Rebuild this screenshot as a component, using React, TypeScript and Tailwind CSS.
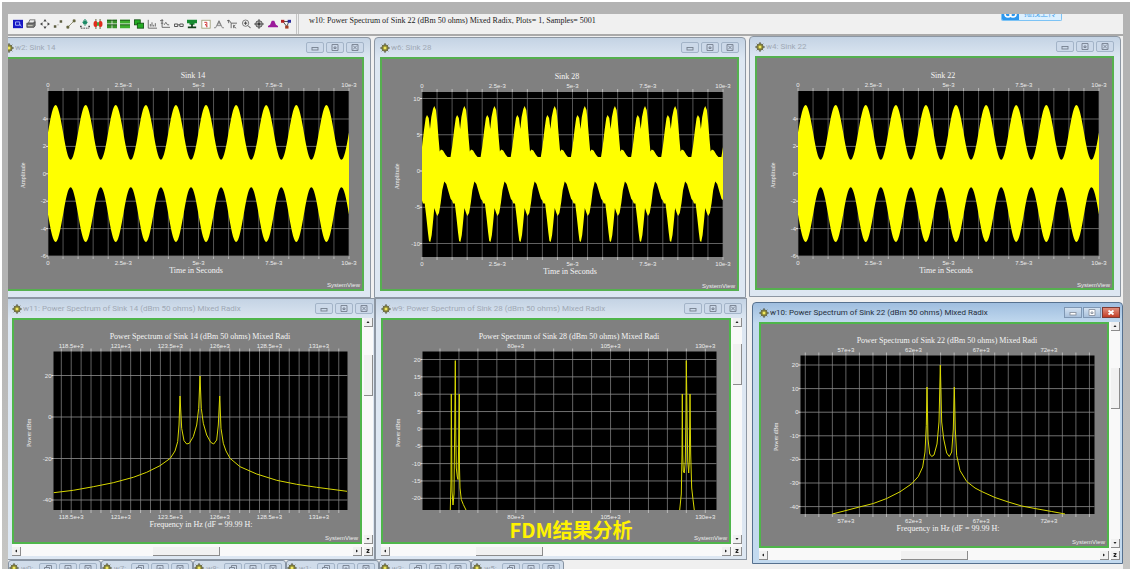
import { ReactNode } from 'react';
import clsx from 'clsx';

interface Axis {
  start: number;
  step: number;
  count: number;
  labels: Record<number, string>;
}

interface PlotProps {
  title: string;
  yTitle: string;
  xTitle?: string;
  viewBox: string;
  area: { x: number; y: number; w: number; h: number };
  xAxis: Axis;
  yAxis: Axis;
  right: number;
  bottom: number;
  center: number;
  xCenter: number;
  gridColor: string;
  children: ReactNode;
}

const range = (n: number) => Array.from({ length: n }, (_, i) => i);

const Plot = ({
  title,
  yTitle,
  xTitle,
  viewBox,
  area,
  xAxis,
  yAxis,
  right,
  bottom,
  center,
  xCenter,
  gridColor,
  children,
}: PlotProps) => {
  const endY = area.y + area.h;
  const endX = area.x + area.w;
  return (
    <svg viewBox={viewBox} className="block h-auto w-full bg-[#808080]" role="img" aria-label={title}>
      <rect x={area.x} y={area.y} width={area.w} height={area.h} fill="#000" />
      {range(xAxis.count).map((i) => {
        const x = xAxis.start + i * xAxis.step;
        return (
          <g key={i}>
            <line x1={x} x2={x} y1={area.y} y2={endY} stroke={gridColor} strokeWidth="0.7" />
            <path d={`M${x} ${area.y - 3}v3M${x} ${endY}v3`} stroke="#d4d4d4" strokeWidth="0.7" />
          </g>
        );
      })}
      {range(yAxis.count).map((i) => {
        const y = yAxis.start + i * yAxis.step;
        return (
          <g key={i}>
            <line x1={area.x} x2={endX} y1={y} y2={y} stroke={gridColor} strokeWidth="0.8" />
            <line x1={area.x - 2} x2={area.x} y1={y} y2={y} stroke="#e5e5e5" />
          </g>
        );
      })}
      {children}
      <g fill="#ececec" className="font-['Liberation_Sans',sans-serif] text-[6px]">
        {Object.entries(xAxis.labels).map(([i, label]) => (
          <g key={i} textAnchor="middle">
            <text x={xAxis.start + Number(i) * xAxis.step} y={area.y - 4}>{label}</text>
            <text x={xAxis.start + Number(i) * xAxis.step} y={endY + 9}>{label}</text>
          </g>
        ))}
        {Object.entries(yAxis.labels).map(([i, label]) => (
          <text key={i} x={area.x - 2} y={yAxis.start + Number(i) * yAxis.step + 2} textAnchor="end">{label}</text>
        ))}
        <text x={right} y={bottom} textAnchor="end">SystemView</text>
      </g>
      <g fill="#f4f4f4" textAnchor="middle" className="font-['Liberation_Serif',serif] text-[8px]">
        <text x={center} y={area.y - 13}>{title}</text>
        {xTitle && <text x={xCenter} y={endY + 17}>{xTitle}</text>}
        <text transform={`translate(19 ${area.y + area.h / 2 + 2}) rotate(-90)`} className="text-[6px]">{yTitle}</text>
      </g>
    </svg>
  );
};

const AREA_WAVE = { x: 42, y: 35, w: 301, h: 165 };
const TIME_AXIS: Axis = {
  start: 42,
  step: 15.05,
  count: 21,
  labels: { 0: '0', 5: '2.5e-3', 10: '5e-3', 15: '7.5e-3', 20: '10e-3' },
};

// 3 + 2 sin(wt) mirrored around zero, ten periods across the plot
const amEnvelope = () => {
  const top: string[] = [];
  const low: string[] = [];
  for (let i = 0; i <= 301; i++) {
    const v = (3 + 2 * Math.sin((i / 30.1) * 2 * Math.PI)) * 13.7;
    top.push(`${42 + i},${(117.5 - v).toFixed(1)}`);
    low.unshift(`${42 + i},${(117.5 + v).toFixed(1)}`);
  }
  return [...top, ...low].join(' ');
};

// One period of the summed signal, [x, y] pairs
const UPPER = [
  [0, 90], [2, 73], [3.7, 61], [5, 58], [6.7, 61], [8, 72], [9.3, 60], [11, 52], [12.3, 49], [14, 53],
  [15.3, 66], [16.7, 83], [17.7, 94.5], [19, 92.5], [21, 93.5], [23.7, 98], [25.5, 100], [28.5, 100], [29.3, 95],
];
const LOWER = [
  [0, 143.5], [1, 146.5], [2.7, 146.5], [4.3, 160], [6, 176], [7, 184], [8.3, 185], [9.7, 178], [11, 165],
  [12.3, 151], [14, 156], [15.3, 159], [17, 156], [18.7, 146], [20.3, 133], [22.3, 124.5], [24.3, 127], [26.3, 134], [28.7, 142],
];

const sumEnvelope = () => {
  const at = (src: number[][]) =>
    range(10).flatMap((p) => src.map(([x, y]) => `${(42 + p * 30.1 + x).toFixed(1)},${y}`));
  return [...at(UPPER), '343,90', '343,143', ...at(LOWER).reverse()].join(' ');
};

const AmPlot = ({ title, viewBox }: { title: string; viewBox: string }) => (
  <Plot
    title={title}
    yTitle="Amplitude"
    xTitle="Time in Seconds"
    viewBox={viewBox}
    area={AREA_WAVE}
    xAxis={TIME_AXIS}
    yAxis={{ start: 63, step: 27.4, count: 6, labels: { 0: '4', 1: '2', 2: '0', 3: '-2', 4: '-4', 5: '-6' } }}
    right={354}
    bottom={231}
    center={187}
    xCenter={190}
    gridColor="#7a7a7a"
  >
    <polygon points={amEnvelope()} fill="#ff0" />
  </Plot>
);

const SumPlot = () => (
  <Plot
    title="Sink 28"
    yTitle="Amplitude"
    xTitle="Time in Seconds"
    viewBox="2 2 355 230"
    area={AREA_WAVE}
    xAxis={TIME_AXIS}
    yAxis={{ start: 41.5, step: 36.25, count: 5, labels: { 0: '10', 1: '5', 2: '0', 3: '-5', 4: '-10' } }}
    right={355}
    bottom={231}
    center={187}
    xCenter={190}
    gridColor="#7a7a7a"
  >
    <polygon points={sumEnvelope()} fill="#ff0" />
  </Plot>
);

const AREA_SPECTRUM = { x: 41.5, y: 33.5, w: 294, h: 158.5 };

interface SpectrumProps {
  title: string;
  xTitle?: string;
  xAxis: Axis;
  yAxis: Axis;
  traces: string[];
}

const Spectrum = ({ traces, ...rest }: SpectrumProps) => (
  <Plot
    {...rest}
    yTitle="Power dBm"
    viewBox="2 2 346 222"
    area={AREA_SPECTRUM}
    right={346}
    bottom={222}
    center={188}
    xCenter={189}
    gridColor="#8e8e8e"
  >
    {traces.map((points, i) => (
      <polyline key={i} points={points} fill="none" stroke="#d8d800" strokeWidth="1" strokeLinejoin="round" />
    ))}
  </Plot>
);

const SINK14 = [
  '41.7,174.7 61.3,172.3 81.3,168.7 101.3,164.7 121.3,159.3 134.7,154.3 148,147.7 158.3,140.3 163,133 165.7,123.7 167,107 168,78 169.7,110.3 172,122.7 174.7,126 177.3,125.3 181.3,118.7 184.7,107 186.7,90.3 188,58 189.3,90.3 191.3,105.3 194.7,117 198.7,124.3 201.7,126 204.7,122 206.3,107 207.7,78 209,110.3 211.3,125.3 214,133 218,140.3 228,148.7 244.7,156 264.7,162.3 284.7,166.3 304.7,169.3 335,173.3',
];
const SINK28 = [
  '69.3,192 70,163 70.3,76 71,173 72,187 73,176 73.7,110 74.3,42.6 74.7,110 75.3,150 76.3,159 77,161.5 77.7,126 78.3,76 78.5,150 79,170 80.3,181.5 82.3,186.5 85,192',
  '298.7,192 300.3,176 301,136 301.3,76 301.7,136 302.3,153 303.3,155 304.3,143 305,93 305.3,42.6 306,93 306.7,143 307.7,155 308.3,143 309,76 309.7,136 310.7,170 312,181.5 313.3,192',
];
const SINK22 = [
  '73.3,192 87,188.5 100.3,185 114.3,181.5 127.7,176.5 141,169.8 152.7,161.8 159.3,154.5 163.7,145 166,130 167.3,103.5 168,65 169,117 170.7,132 172.7,134.5 175,133 178,122 180,100 181.3,43 182.7,100 184.7,117 187.7,131 190.3,134.5 192.7,130 194.3,107 195.3,65 196.3,107 197.7,133.5 201,148.5 207.7,159.5 216,166 222.7,169.5 236,175.5 249.3,180 262.7,184 276,186.5 292.7,189.5 306,192',
];

const AppIcon = ({ className }: { className?: string }) => (
  <svg viewBox="0 0 10 10" className={clsx('h-[10px] w-[10px] shrink-0', className)} aria-hidden="true">
    <circle cx="5" cy="5" r="3.2" fill="#d9d24a" stroke="#55553a" strokeWidth="0.9" />
    <path d="M5 0v10M0 5h10" stroke="#44442c" strokeWidth="0.8" />
    <path d="M1.6 1.6l6.8 6.8M8.4 1.6L1.6 8.4" stroke="#55553a" strokeWidth="0.6" />
    <circle cx="5" cy="5" r="1.3" fill="#f0e860" />
  </svg>
);

const GLYPHS = {
  minimize: <rect x="3" y="4.5" width="6" height="2.5" />,
  restore: <path d="M4.5 3.5v-2h5v4h-2M2.5 3.5h5v4h-5z" />,
  maximize: <path d="M3 1.5h6v6H3zM5 4h2v1.5H5z" />,
  close: <path d="M3 1.5h6v6H3zM4 2.5l4 4M8 2.5l-4 4" />,
};

type Glyph = keyof typeof GLYPHS;

const CaptionButton = ({ glyph, label, active }: { glyph: Glyph; label: string; active?: boolean }) => (
  <button
    type="button"
    aria-label={label}
    className={clsx(
      'flex h-[11px] w-[18px] items-center justify-center border',
      !active && 'rounded-[2px] border-[#a3b4c8] bg-[#ccd9e9]',
      active && glyph !== 'close' && 'border-[#7f97b3] bg-linear-to-b from-[#d4e2f1] to-[#a9c1dc]',
      active && glyph === 'close' && 'border-[#7c3a34] bg-linear-to-b from-[#e08d7c] to-[#c23c25]'
    )}
  >
    <svg
      viewBox="0 0 12 9"
      className="h-[9px] w-[12px]"
      fill={active ? '#fff' : 'none'}
      stroke={active ? '#8b93a0' : '#76808f'}
      strokeWidth="0.9"
      aria-hidden="true"
    >
      {active && glyph === 'close' ? <path d="M3.5 2.5l5 4M8.5 2.5l-5 4" stroke="#fff" strokeWidth="1.8" /> : GLYPHS[glyph]}
    </svg>
  </button>
);

const TitleBar = ({ title, active, cut }: { title: string; active?: boolean; cut?: boolean }) => (
  <div className="flex h-[19px] items-center">
    <AppIcon className={cut ? '-ml-1' : ''} />
    <h2
      className={clsx(
        "ml-px flex-1 truncate font-['Roboto',sans-serif] text-[8px] leading-3",
        active ? 'text-[#26303c]' : 'text-[#a0a9b5]'
      )}
    >
      {title}
    </h2>
    <div className={clsx('flex', active ? 'gap-px' : 'gap-[2px]')}>
      <CaptionButton glyph="minimize" label="Minimize" active={active} />
      <CaptionButton glyph="maximize" label="Maximize" active={active} />
      <CaptionButton glyph="close" label="Close" active={active} />
    </div>
  </div>
);

const ScrollButton = ({ d, label }: { d: string; label: string }) => (
  <button type="button" aria-label={label} className="h-[9px] w-[9px] shrink-0 border-r border-b border-[#8c8c8c] bg-[#f1f1f1]">
    <svg viewBox="0 0 8 8" className="h-[8px] w-[8px]" aria-hidden="true">
      <path d={d} fill="#222" />
    </svg>
  </button>
);

// before/after are the free track lengths on each side of the thumb
const VScroll = ({ before, after }: { before: number; after: number }) => (
  <div className="flex w-[9px] flex-col bg-[#f9f9f9]">
    <ScrollButton label="Scroll up" d="M2.5 5h3L4 3z" />
    <div style={{ flexGrow: before }} />
    <div className="h-[41px] border-r border-b border-[#8c8c8c] bg-[#f1f1f1]" />
    <div style={{ flexGrow: after }} />
    <ScrollButton label="Scroll down" d="M2.5 3h3L4 5z" />
  </div>
);

const HScroll = ({ before, after }: { before: number; after: number }) => (
  <div className="flex h-[9px] min-w-0 flex-1 bg-[#f9f9f9]">
    <ScrollButton label="Scroll left" d="M5 2.5v3L3 4z" />
    <div style={{ flexGrow: before }} />
    <div className="w-[67px] border-r border-b border-[#8c8c8c] bg-[#f1f1f1]" />
    <div style={{ flexGrow: after }} />
    <ScrollButton label="Scroll right" d="M3 2.5v3L5 4z" />
  </div>
);

const WaveWindow = ({ title, cut, children }: { title: string; cut?: boolean; children: ReactNode }) => (
  <section
    className={clsx(
      'border border-[#8d97a3] bg-linear-to-b from-[#c4d3e4] to-[#dde7f2] to-8% pr-[6px] pb-[6px]',
      cut ? 'rounded-tr-[4px] border-l-0' : 'rounded-t-[4px] pl-[5px]'
    )}
  >
    <TitleBar title={title} cut={cut} />
    <div className={clsx('border-2 border-[#55b04f]', cut && 'border-l-0')}>{children}</div>
  </section>
);

interface SpectrumWindowProps {
  title: string;
  active?: boolean;
  className?: string;
  h: [number, number];
  v: [number, number];
  children: ReactNode;
}

const SpectrumWindow = ({ title, active, className, h, v, children }: SpectrumWindowProps) => (
  <section
    className={clsx(
      'border pb-[3px]',
      active
        ? 'border-[#56718f] bg-linear-to-b from-[#9fbedf] to-[#c3daef] to-8%'
        : 'border-[#8d97a3] bg-linear-to-b from-[#c4d3e4] to-[#dde7f2] to-8%',
      className
    )}
  >
    <TitleBar title={title} active={active} />
    <div className="bg-[#f9f9f9]">
      <div className="flex gap-[2px]">
        <div className="min-w-0 flex-1 border-2 border-[#4fb54b]">{children}</div>
        <VScroll before={v[0]} after={v[1]} />
      </div>
      <div className="flex gap-[2px] pt-[3px]">
        <HScroll before={h[0]} after={h[1]} />
        <ScrollButton label="Zoom" d="M2.5 2h3v1L4 5h1.5v1h-3V5L4 3H2.5z" />
      </div>
    </div>
  </section>
);

const MinimizedWindow = ({ title }: { title: string }) => (
  <section className="flex h-[24px] min-w-0 items-start gap-[2px] rounded-t-[3px] border border-[#8793a2] bg-[#d0dcea] pt-[2px] pr-[3px]">
    <AppIcon />
    <span className="flex-1 truncate font-['Roboto',sans-serif] text-[8px] leading-3 text-[#a0a9b5]">{title}</span>
    <CaptionButton glyph="restore" label="Restore" />
    <CaptionButton glyph="maximize" label="Maximize" />
    <CaptionButton glyph="close" label="Close" />
  </section>
);

const TOOLS: { label: string; icon: ReactNode }[] = [
  { label: 'System window', icon: <><rect y="1" width="12" height="10" fill="#1717c4" /><path d="M3 3.5h5v4H3zM8 6l2 3" fill="none" stroke="#b8c8ff" /></> },
  { label: 'Print', icon: <><path d="M3 5l1.5-4H11L9 5z" fill="#eee" stroke="#444" strokeWidth="0.8" /><path d="M1 5h9l1-2v5L9.5 10H1z" fill="#777" stroke="#333" strokeWidth="0.8" /><path d="M2 8h6" stroke="#ddc" /></> },
  { label: 'Pan', icon: <path d="M6 0l2 3H4zM6 12l2-3H4zM0 6l3-2v4zM12 6L9 4v4z" fill="#444" /> },
  { label: 'Points', icon: <path d="M1 7.5h3v3H1zM8 1.5h3v3H8zM5.5 6.500h1v1h-1z" fill="#5c5c40" /> },
  { label: 'Connect points', icon: <path d="M2 10L10 2M1 8.5h2.5V11H1zM8.5 1H11v2.5H8.5z" fill="#66663f" stroke="#66663f" strokeWidth="0.8" /> },
  { label: 'Point labels', icon: <><path d="M6 0v8M3 4h6M4 2l4 4M8 2L4 6" stroke="#1c8a66" strokeWidth="1.3" /><path d="M0 8h2v2H0zM10 8h2v2h-2z" fill="#444" /><path d="M1 11h10" stroke="#333" strokeDasharray="2 1" /></> },
  { label: 'Segments', icon: <><path d="M3.5 0v12M8.5 0v12" stroke="#4b4b1b" /><ellipse cx="3" cy="6" rx="2.4" ry="3.5" fill="#e02b1c" /><ellipse cx="9" cy="6" rx="2.4" ry="3.5" fill="#e02b1c" /><path d="M6 4v4" stroke="#1fa32a" strokeWidth="2" /></> },
  { label: 'Tile windows', icon: <><path d="M0 1h5.5v4.5H0zM6.5 1H12v4.5H6.5zM0 6.5h5.5V11H0zM6.5 6.5H12V11H6.5z" fill="#3a942b" /><path d="M0 1.5h12M0 7h12" stroke="#1d4d18" /></> },
  { label: 'Stack windows', icon: <><path d="M0 1h12v4.5H0zM0 6.5h12V11H0z" fill="#3fae2d" /><path d="M0 1.5h12M0 7h12" stroke="#1d4d18" /></> },
  { label: 'Cascade windows', icon: <><rect x="0.5" y="1" width="7" height="6" fill="#25ad25" stroke="#144f14" /><rect x="4" y="5" width="7.5" height="6" fill="#25ad25" stroke="#144f14" /></> },
  { label: 'Log axis X', icon: <path d="M1.5 1v10H12M4 9V6M6 9V4M8 9V7M10 9V5" fill="none" stroke="#555" /> },
  { label: 'Log axis Y', icon: <path d="M2.5 0v10H12M0 2h4M1 5h3M5 7l2-3 2 3h2" fill="none" stroke="#555" /> },
  { label: 'Rescale', icon: <path d="M0.5 6h4v3h-4zM7 6h4v3H7zM5 7h2" fill="none" stroke="#555" strokeWidth="1.2" /> },
  { label: 'Animate', icon: <><path d="M0 1h12v4H9v2H3V5H0z" fill="#168a30" /><path d="M5 6h2v3h4v2H1V9h4z" fill="#113e1a" /></> },
  { label: 'Statistics', icon: <><rect x="1" y="1.5" width="10" height="9.5" fill="#fff" stroke="#9a9a72" /><path d="M4 4h3M5 6l2 3M7 4v6" stroke="#d23939" strokeWidth="1.2" /></> },
  { label: 'Peak', icon: <path d="M0 10.5h2L6 2l4 8.5h2M4 8l2-5 2 5z" fill="none" stroke="#777" /> },
  { label: 'Measure', icon: <path d="M0 2h3l2 3h7M5 5v6M8 7v4M10 7l-2 2 3 2M2 1v4" fill="none" stroke="#555" /> },
  { label: 'Zoom', icon: <><circle cx="5.5" cy="5" r="3.8" fill="none" stroke="#666" /><path d="M3.5 5h4M5.5 3v4M8.5 8l3 3" stroke="#444" strokeWidth="1.2" /></> },
  { label: 'Crosshair', icon: <><circle cx="6" cy="6" r="4" fill="#b5b5b5" stroke="#444" /><circle cx="6" cy="6" r="1.6" fill="#333" /><path d="M6 0v12M0 6h12" stroke="#444" /></> },
  { label: 'Sink calculator', icon: <path d="M0 10h12V8.500L9.5 7 7.5 2h-3l-2 5L0 8.500z" fill="#9b1a9b" /> },
  { label: 'Block diagram', icon: <><path d="M2 3h7M3 4l4 5M9 4L7 9" stroke="#333" /><path d="M0 1h4v3.5H0z" fill="#b32020" /><path d="M8 1h4v3.5H8z" fill="#2a2a9a" /><path d="M5 8h4v3.5H5z" fill="#a33c22" /></> },
];

const Toolbar = () => (
  <header className="relative flex h-[22px] shrink-0 items-stretch border-b-2 border-[#aaa] bg-[#f0f0f0]">
    <div className="ml-[3px] flex w-[282px] items-center">
      {TOOLS.map((tool) => (
        <button key={tool.label} type="button" aria-label={tool.label} className="flex flex-1 justify-center">
          <svg viewBox="0 0 12 12" className="h-[10px] w-[10px]" fill="none">{tool.icon}</svg>
        </button>
      ))}
    </div>
    <div className="ml-[3px] w-[3px] border-x border-[#c4c4c4]" />
    <p className="ml-[10px] pt-[2px] font-['Liberation_Serif',serif] text-[8px] leading-[10px] text-[#222]">
      w10: Power Spectrum of Sink 22 (dBm 50 ohms) Mixed Radix, Plots= 1, Samples= 5001
    </p>
    {/* Upload widget tucked under the top edge */}
    <div className="absolute top-0 right-[61px] h-[7px] w-[61px] overflow-hidden rounded-b-[2px] border border-t-0 border-[#7cc3f5]">
      <button type="button" className="-mt-[8px] flex w-full items-center bg-[#dcf0ff] text-[#3fa0ea]">
        <svg viewBox="0 0 17 14" className="h-[14px] w-[17px] shrink-0 bg-[#2d97ee]" fill="none" stroke="#fff" strokeWidth="1.6" aria-hidden="true">
          <circle cx="6" cy="8" r="3" />
          <circle cx="11" cy="8" r="3" />
        </svg>
        <span className="flex-1 font-['Noto_Sans_CJK_SC',sans-serif] text-[8px] leading-[14px]">拖拽上传</span>
      </button>
    </div>
  </header>
);

const App = () => (
  <div className="flex h-screen flex-col overflow-hidden border-t-2 border-l-2 border-white bg-linear-to-b from-[#b3b3b3] from-50% to-[#c6c6c4] pt-[12px] pr-[7px] pl-[6px]">
    <Toolbar />
    <main className="grid min-h-0 flex-1 grid-cols-[741fr_374fr] items-start overflow-hidden bg-[#f0f0f0]">
      <div className="pt-px">
        <div className="grid grid-cols-[363fr_372fr] gap-[3px] pr-[3px]">
          <WaveWindow title="w2: Sink 14" cut>
            <AmPlot title="Sink 14" viewBox="2 3 354 230" />
          </WaveWindow>
          <WaveWindow title="w6: Sink 28">
            <SumPlot />
          </WaveWindow>
        </div>
        <div className="grid grid-cols-[367fr_372fr] pr-[2px]">
          <SpectrumWindow
            title="w11: Power Spectrum of Sink 14 (dBm 50 ohms) Mixed Radix"
            className="border-l-0 pr-px pl-[4px]"
            h={[132, 134]}
            v={[28, 139]}
          >
            <Spectrum
              title="Power Spectrum of Sink 14 (dBm 50 ohms) Mixed Radi"
              xTitle="Frequency in Hz (dF = 99.99 H:"
              xAxis={{
                start: 49.3,
                step: 9.91,
                count: 29,
                labels: { 1: '118.5e+3', 6: '121e+3', 11: '123.5e+3', 16: '126e+3', 21: '128.5e+3', 26: '131e+3' },
              }}
              yAxis={{ start: 57.5, step: 41.5, count: 4, labels: { 0: '20', 1: '0', 2: '-20', 3: '-40' } }}
              traces={SINK14}
            />
          </SpectrumWindow>
          <div className="relative">
            <SpectrumWindow
              title="w9: Power Spectrum of Sink 28 (dBm 50 ohms) Mixed Radix"
              className="pr-[4px] pl-[5px]"
              h={[86, 180]}
              v={[17, 150]}
            >
              <Spectrum
                title="Power Spectrum of Sink 28 (dBm 50 ohms) Mixed Radi"
                xAxis={{ start: 59, step: 18.95, count: 15, labels: { 4: '80e+3', 9: '105e+3', 14: '130e+3' } }}
                yAxis={{
                  start: 41.5,
                  step: 17.35,
                  count: 9,
                  labels: { 0: '20', 1: '15', 2: '10', 3: '5', 4: '0', 5: '-5', 6: '-10', 7: '-15', 8: '-20' },
                }}
                traces={SINK28}
              />
            </SpectrumWindow>
            <p className="absolute inset-x-0 bottom-[18px] pl-[20px] text-center font-['Noto_Sans_CJK_SC',sans-serif] text-[20px] leading-6 font-bold text-[#fff200]">
              FDM结果分析
            </p>
          </div>
        </div>
        <div className="grid w-3/4 grid-cols-6">
          <MinimizedWindow title="w0:" />
          <MinimizedWindow title="w7:" />
          <MinimizedWindow title="w8:" />
          <MinimizedWindow title="w1:" />
          <MinimizedWindow title="w3:" />
          <MinimizedWindow title="w5:" />
        </div>
      </div>
      <div className="flex flex-col gap-[5px]">
        <div className="pr-[2px]">
          <WaveWindow title="w4: Sink 22">
            <AmPlot title="Sink 22" viewBox="1 2 355 230" />
          </WaveWindow>
        </div>
        <SpectrumWindow
          title="w10: Power Spectrum of Sink 22 (dBm 50 ohms) Mixed Radix"
          className="ml-[3px] rounded-t-[4px] pr-[2px] pl-[6px]"
          h={[133, 133]}
          v={[37, 130]}
          active
        >
          <Spectrum
            title="Power Spectrum of Sink 22 (dBm 50 ohms) Mixed Radi"
            xTitle="Frequency in Hz (dF = 99.99 H:"
            xAxis={{ start: 46.3, step: 13.53, count: 22, labels: { 3: '57e+3', 8: '62e+3', 13: '67e+3', 18: '72e+3' } }}
            yAxis={{
              start: 43,
              step: 23.6,
              count: 7,
              labels: { 0: '20', 1: '10', 2: '0', 3: '-10', 4: '-20', 5: '-30', 6: '-40' },
            }}
            traces={SINK22}
          />
        </SpectrumWindow>
      </div>
    </main>
  </div>
);

export default App;
